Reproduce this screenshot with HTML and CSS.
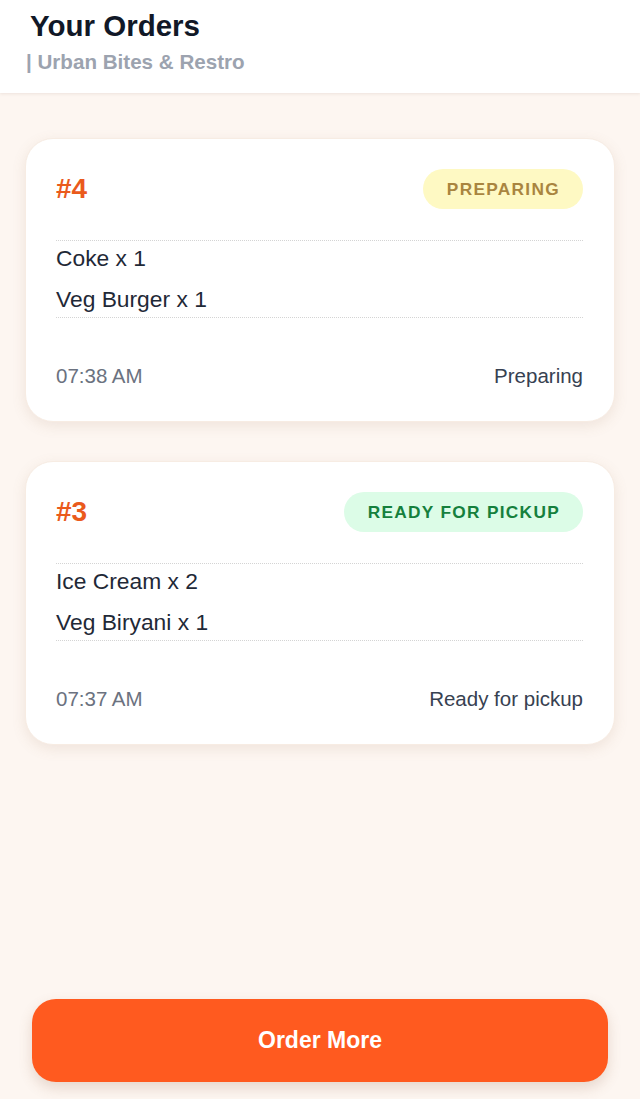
FILE: index.html
```html
<!DOCTYPE html>
<html lang="en">
<head>
    <meta charset="UTF-8">
    <meta name="viewport" content="width=device-width, initial-scale=1.0">
    <title>Your Orders</title>
    <link rel="stylesheet" href="styles.css">
</head>
<body>

    <header class="topbar">
        <h1 class="topbar-title">Your Orders</h1>
        <div class="topbar-sub">| Urban Bites &amp; Restro</div>
    </header>

    <main class="orders">
        <section class="order-card">
            <div class="order-head">
                <div class="order-id">#4</div>
                <div class="badge badge-preparing">PREPARING</div>
            </div>
            <ul class="order-items">
                <li>Coke x 1</li>
                <li>Veg Burger x 1</li>
            </ul>
            <div class="order-foot">
                <span class="order-time">07:38 AM</span>
                <span class="order-status">Preparing</span>
            </div>
        </section>

        <section class="order-card">
            <div class="order-head">
                <div class="order-id">#3</div>
                <div class="badge badge-ready">READY FOR PICKUP</div>
            </div>
            <ul class="order-items">
                <li>Ice Cream x 2</li>
                <li>Veg Biryani x 1</li>
            </ul>
            <div class="order-foot">
                <span class="order-time">07:37 AM</span>
                <span class="order-status">Ready for pickup</span>
            </div>
        </section>
    </main>

    <footer class="bottom">
        <button class="order-more">Order More</button>
    </footer>

</body>
</html>
```

FILE: styles.css
```css
* {
  box-sizing: border-box;
}

html {
  -webkit-font-smoothing: antialiased;
}

body {
  margin: 0;
  min-height: 100vh;
  display: flex;
  flex-direction: column;
  font-family: "Liberation Sans", Arial, sans-serif;
  background: #fdf6f1;
  color: #1f2937;
}

.topbar {
  background: #fff;
  padding: 8px 30px 18px;
  box-shadow: 0 1px 3px rgba(120, 90, 70, 0.12);
}
.topbar-title {
  margin: 0;
  font-size: 29.5px;
  line-height: 35px;
  font-weight: 700;
  color: #111827;
}
.topbar-sub {
  margin: 6px 0 0 -4px;
  font-size: 20.6px;
  line-height: 26px;
  font-weight: 700;
  color: #9ca3af;
}

.orders {
  flex: 1;
  display: flex;
  flex-direction: column;
  gap: 39px;
  padding: 45px 25px 0;
}

.order-card {
  background: #fff;
  border-radius: 28px;
  padding: 30px 31px 33px 30px;
  border: 1px solid #f7ece3;
  box-shadow: 0 4px 14px rgba(150, 110, 80, 0.13);
}

.order-head {
  display: flex;
  justify-content: space-between;
  align-items: center;
  height: 40px;
}
.order-id {
  font-size: 28px;
  font-weight: 700;
  color: #ea5a1c;
}

.badge {
  height: 40px;
  display: flex;
  align-items: center;
  padding: 0 23px 0 24px;
  border-radius: 20px;
  font-size: 17.3px;
  font-weight: 700;
  letter-spacing: 1.3px;
}
.badge-preparing {
  background: #fef9c3;
  color: #a9853f;
}
.badge-ready {
  background: #dcfce7;
  color: #15803d;
}

.order-items {
  list-style: none;
  margin: 31px 0 0;
  padding: 3px 0 4px;
  display: flex;
  flex-direction: column;
  gap: 13px;
  border-top: 1px dotted #d4d4d4;
  border-bottom: 1px dotted #d4d4d4;
  font-size: 22.8px;
  line-height: 28px;
  color: #1f2937;
}

.order-foot {
  display: flex;
  justify-content: space-between;
  align-items: center;
  margin-top: 46px;
  font-size: 20.5px;
  line-height: 24px;
}
.order-time {
  color: #6b7280;
}
.order-status {
  color: #374151;
}

.bottom {
  padding: 0 32px 17px;
}
.order-more {
  display: block;
  width: 100%;
  height: 83px;
  border: none;
  border-radius: 24px;
  background: #ff5a1f;
  color: #fff;
  font-family: inherit;
  font-size: 23px;
  font-weight: 700;
  box-shadow: 0 6px 14px rgba(140, 90, 60, 0.2);
  cursor: pointer;
}
```
